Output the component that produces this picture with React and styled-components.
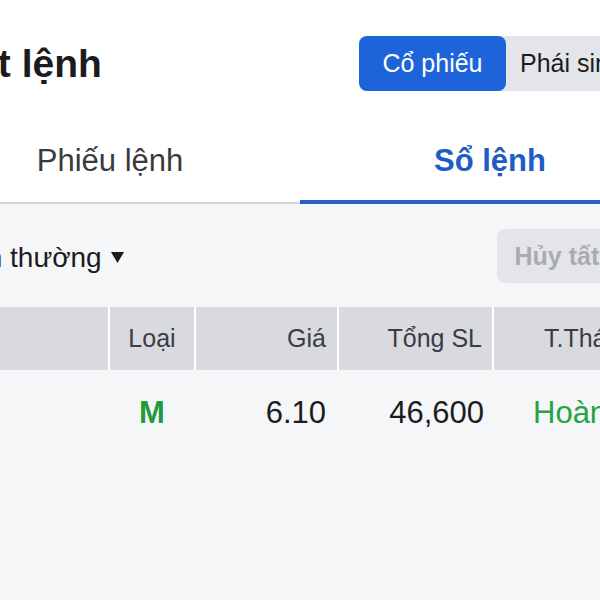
import React from "react";
import styled, { createGlobalStyle } from "styled-components";

const GlobalStyle = createGlobalStyle`
  html, body { margin: 0; padding: 0; }
  body {
    background: #f5f6f8;
    overflow: hidden;
    font-family: "Liberation Sans", Arial, sans-serif;
    -webkit-font-smoothing: antialiased;
  }
`;

const Screen = styled.div`
  width: 760px;
  margin-left: -80px;
  min-height: 600px;
  background: #f5f6f8;
`;

const Top = styled.div`
  background: #ffffff;
`;

const Header = styled.div`
  display: flex;
  align-items: center;
  justify-content: space-between;
  padding: 36px 27px 0 28px;
`;

const Title = styled.h1`
  margin: 0;
  font-size: 39px;
  line-height: 55px;
  font-weight: 700;
  color: #1c1c1e;
`;

const Segment = styled.div`
  display: flex;
  height: 55px;
  border-radius: 8px;
  background: #e4e5ea;
`;

const SegmentItem = styled.div`
  width: 147px;
  box-sizing: border-box;
  display: flex;
  align-items: center;
  justify-content: ${(p) => (p.$active ? "center" : "flex-start")};
  padding-left: ${(p) => (p.$active ? "0" : "14px")};
  border-radius: 8px;
  font-size: 25px;
  color: ${(p) => (p.$active ? "#ffffff" : "#1c1c1e")};
  background: ${(p) => (p.$active ? "#1d63d9" : "transparent")};
`;

const TabBar = styled.div`
  display: flex;
  align-items: flex-start;
  border-bottom: 2px solid #d3d4d9;
`;

const Tab = styled.div`
  flex: 1;
  box-sizing: border-box;
  height: ${(p) => (p.$active ? "113px" : "111px")};
  margin-bottom: ${(p) => (p.$active ? "-2px" : "0")};
  border-bottom: ${(p) => (p.$active ? "4px solid #2760c8" : "none")};
  padding-top: 50px;
  text-align: center;
  font-size: 31px;
  line-height: 40px;
  font-weight: ${(p) => (p.$active ? 700 : 400)};
  color: ${(p) => (p.$active ? "#1f5cc4" : "#3a3a3c")};
`;

const Toolbar = styled.div`
  display: flex;
  align-items: center;
  justify-content: space-between;
  padding: 25px 28px 0 20px;
`;

const Picker = styled.div`
  display: flex;
  align-items: center;
  gap: 9px;
  margin-top: 3px;
  font-size: 28px;
  color: #1c1c1e;
`;

const CancelAll = styled.button`
  height: 54px;
  padding: 0 18px;
  border: none;
  border-radius: 8px;
  background: #e4e5e9;
  color: #a9abb1;
  font-family: inherit;
  font-size: 25px;
  font-weight: 700;
`;

const cols = "188px 84px 141px 153px 186px";

const HeadRow = styled.div`
  margin-top: 24px;
  display: grid;
  grid-template-columns: ${cols};
  column-gap: 2px;
  background: #ffffff;
`;

const HeadCell = styled.div`
  height: 63px;
  display: flex;
  align-items: center;
  justify-content: ${(p) => p.$justify || "flex-start"};
  padding: ${(p) => p.$pad || "0"};
  background: #d9dadf;
  font-size: 25px;
  color: #3c3c43;
`;

const DataRow = styled.div`
  display: grid;
  grid-template-columns: ${cols};
  column-gap: 2px;
  height: 84px;
  align-items: center;
`;

const DataCell = styled.div`
  display: flex;
  justify-content: ${(p) => p.$justify || "flex-start"};
  padding: ${(p) => p.$pad || "0"};
  font-size: 31px;
  line-height: 31px;
  font-weight: ${(p) => (p.$bold ? 700 : 400)};
  color: ${(p) => p.$color || "#1c1c1e"};
  white-space: nowrap;
`;

const Caret = () => (
  <svg width="13" height="11" viewBox="0 0 13 11">
    <path d="M0 0 H13 L6.5 11 Z" fill="#1c1c1e" />
  </svg>
);

export default function App() {
  return (
    <>
      <GlobalStyle />
      <Screen>
        <Top>
          <Header>
            <Title>Đặt lệnh</Title>
            <Segment>
              <SegmentItem $active>Cổ phiếu</SegmentItem>
              <SegmentItem>Phái sinh</SegmentItem>
            </Segment>
          </Header>
          <TabBar>
            <Tab>Phiếu lệnh</Tab>
            <Tab $active>Sổ lệnh</Tab>
          </TabBar>
        </Top>
        <Toolbar>
          <Picker>
            Lệnh thường
            <Caret />
          </Picker>
          <CancelAll>Hủy tất cả</CancelAll>
        </Toolbar>
        <HeadRow>
          <HeadCell />
          <HeadCell $justify="center">Loại</HeadCell>
          <HeadCell $justify="flex-end" $pad="0 11px 0 0">Giá</HeadCell>
          <HeadCell $justify="flex-end" $pad="0 10px 0 0">Tổng SL</HeadCell>
          <HeadCell $pad="0 0 0 50px">T.Thái</HeadCell>
        </HeadRow>
        <DataRow>
          <DataCell />
          <DataCell $justify="center" $bold $color="#1f9b3c">M</DataCell>
          <DataCell $justify="flex-end" $pad="0 11px 0 0">6.10</DataCell>
          <DataCell $justify="flex-end" $pad="0 8px 0 0">46,600</DataCell>
          <DataCell $pad="0 0 0 39px" $color="#25a346">Hoàn thành</DataCell>
        </DataRow>
      </Screen>
    </>
  );
}
